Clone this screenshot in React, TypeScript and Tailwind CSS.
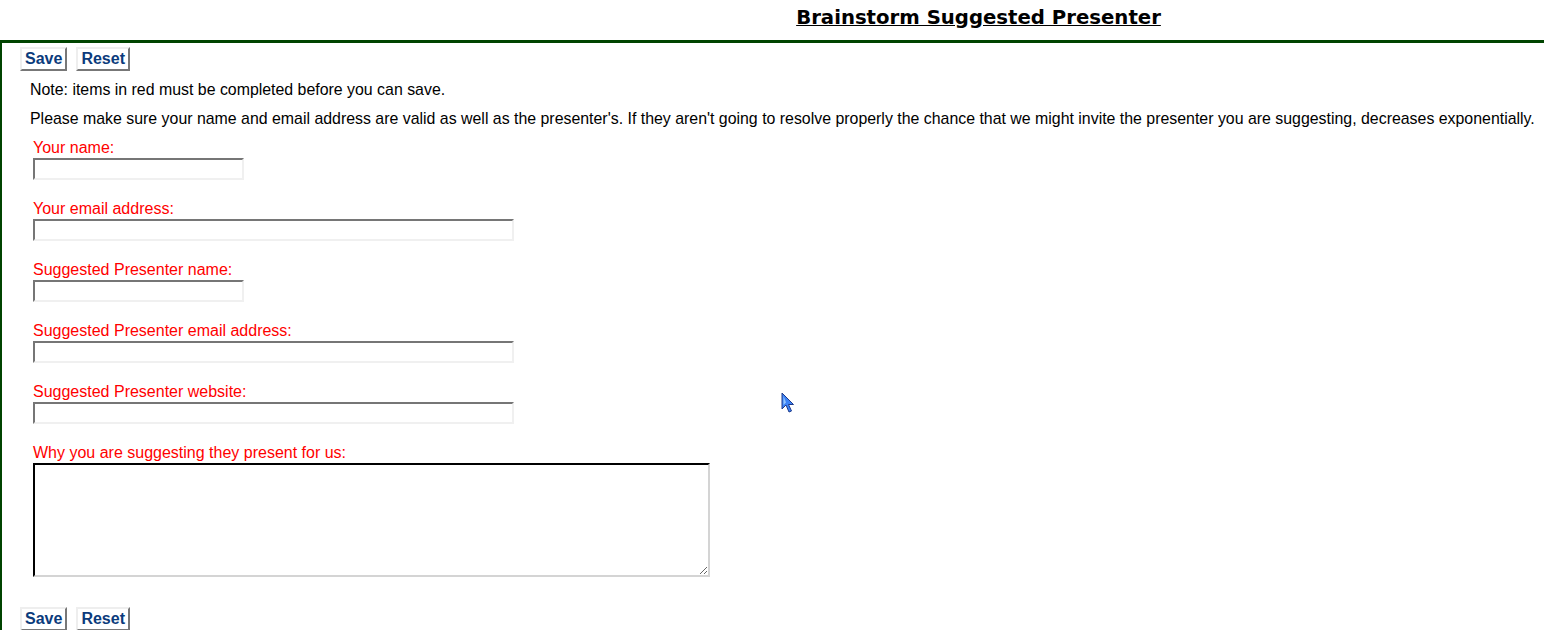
import React from 'react';

const fields = [
  { label: 'Your name:', wide: false },
  { label: 'Your email address:', wide: true },
  { label: 'Suggested Presenter name:', wide: false },
  { label: 'Suggested Presenter email address:', wide: true },
  { label: 'Suggested Presenter website:', wide: true },
];

const FormButtons: React.FC = () => (
  <div className="flex items-center gap-[9px]">
    <button className="px-[3px] h-[24px] bg-white border-2 border-t-[#eeeeee] border-l-[#eeeeee] border-b-[#777777] border-r-[#777777] text-[16px] font-bold text-[#0b3b7c] leading-none">
      Save
    </button>
    <button className="px-[3px] h-[24px] bg-white border-2 border-t-[#eeeeee] border-l-[#eeeeee] border-b-[#777777] border-r-[#777777] text-[16px] font-bold text-[#0b3b7c] leading-none">
      Reset
    </button>
  </div>
);

export default function App() {
  return (
    <div className="relative min-h-[630px] bg-white text-black font-['Liberation_Sans',Arial,sans-serif]">
      {/* Title */}
      <div className="h-[40px] flex items-end justify-center pl-[413px] pb-[12px]">
        <h1 className="text-[19.7px] leading-none font-bold underline font-['DejaVu_Sans',Verdana,sans-serif]">
          Brainstorm Suggested Presenter
        </h1>
      </div>

      {/* Body */}
      <div className="border-t-[3px] border-l-2 border-[#004400] pl-[18px] pt-[4px] pb-[20px]">
        <FormButtons />

        <div className="pl-[10px] pt-[9px] text-[15.9px] leading-[20px]">
          <p>Note: items in red must be completed before you can save.</p>
          <p className="mt-[9px] whitespace-nowrap">
            Please make sure your name and email address are valid as well as the presenter's. If they aren't going to
            resolve properly the chance that we might invite the presenter you are suggesting, decreases exponentially.
          </p>
        </div>

        <div className="pl-[13px] pt-[9px] flex flex-col">
          {fields.map((f) => (
            <div key={f.label} className="mb-[19px]">
              <div className="text-[16px] leading-[20px] text-[#ff0000]">{f.label}</div>
              <input
                type="text"
                className={`block h-[22px] bg-white border-2 border-t-[#767676] border-l-[#767676] border-b-[#f0f0f0] border-r-[#f0f0f0] outline-none ${
                  f.wide ? 'w-[481px]' : 'w-[211px]'
                }`}
              />
            </div>
          ))}

          <div className="text-[16px] leading-[20px] text-[#ff0000]">Why you are suggesting they present for us:</div>
          <textarea className="block w-[677px] h-[114px] bg-white border-2 border-t-[#000000] border-l-[#000000] border-b-[#d4d4d4] border-r-[#d4d4d4] outline-none resize" />
        </div>

        <div className="pt-[30px]">
          <FormButtons />
        </div>
      </div>

      {/* Mouse pointer */}
      <svg className="absolute left-[781px] top-[392px]" width="14" height="24" viewBox="0 0 14 24">
        <path d="M1 1 L1 17 L5 13 L8 20 L10.5 19 L7.5 12.5 L12.5 12.5 Z" fill="#3b82f6" stroke="#1e3a8a" strokeWidth="1" strokeLinejoin="round" />
        <path d="M2.5 4 L2.5 13 L5 10.5 Z" fill="#93c5fd" />
      </svg>
    </div>
  );
}
